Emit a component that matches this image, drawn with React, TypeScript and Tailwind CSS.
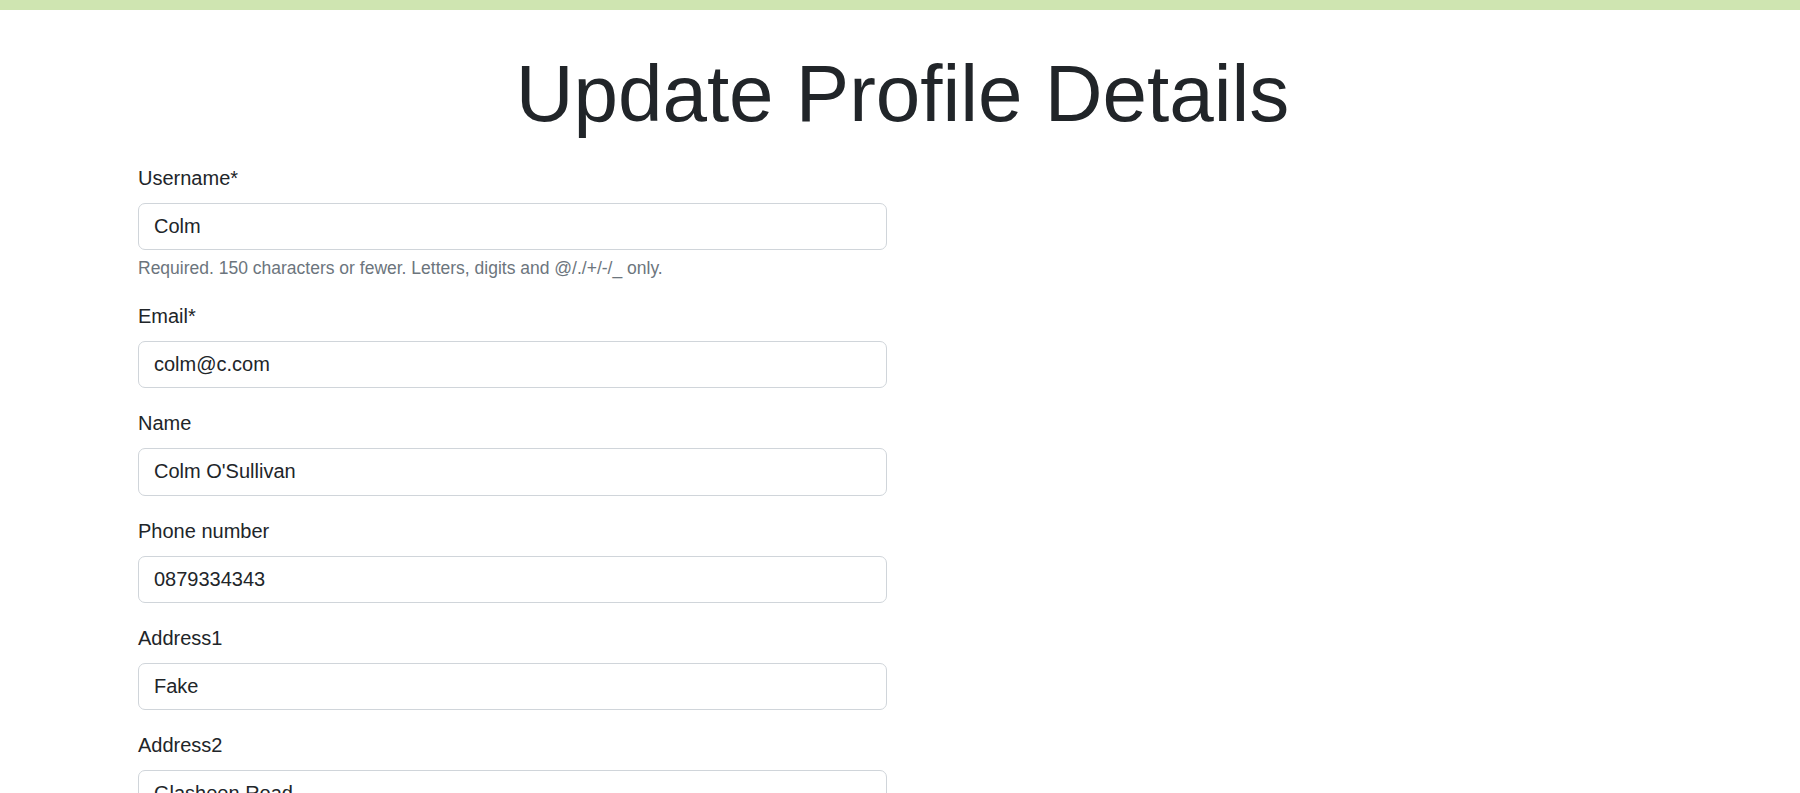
const fields = [
  { label: 'Username*', value: 'Colm', help: 'Required. 150 characters or fewer. Letters, digits and @/./+/-/_ only.' },
  { label: 'Email*', value: 'colm@c.com' },
  { label: 'Name', value: "Colm O'Sullivan" },
  { label: 'Phone number', value: '0879334343' },
  { label: 'Address1', value: 'Fake' },
  { label: 'Address2', value: 'Glasheen Road' },
  { label: 'City', value: 'Cork' },
]

export default function App() {
  return (
    <div className="min-h-screen bg-white text-[#212529] font-['Liberation_Sans',Arial,sans-serif]">
      <div className="h-[10px] bg-[#cfe5b1]" />

      <div className="px-[138px]">
        <h1 className="mt-[36px] pl-[5px] text-center text-[80px] leading-[96px] font-normal">Update Profile Details</h1>

        <form className="w-[749px] mt-[21px]">
          {fields.map((f, i) => (
            <div key={i} className="mb-[20px]">
              <label className="block text-[20px] leading-[30px] mb-[10px]">{f.label}</label>
              <input
                readOnly
                value={f.value}
                className="block w-full h-[47.3px] px-[15px] text-[20px] leading-[30px] text-[#212529] bg-white border border-[#d0d5da] rounded-[7px] outline-none"
              />
              {f.help && (
                <div className="mt-[4.5px] text-[17.5px] leading-[26.25px] text-[#6c757d]">{f.help}</div>
              )}
            </div>
          ))}
        </form>
      </div>
    </div>
  )
}
